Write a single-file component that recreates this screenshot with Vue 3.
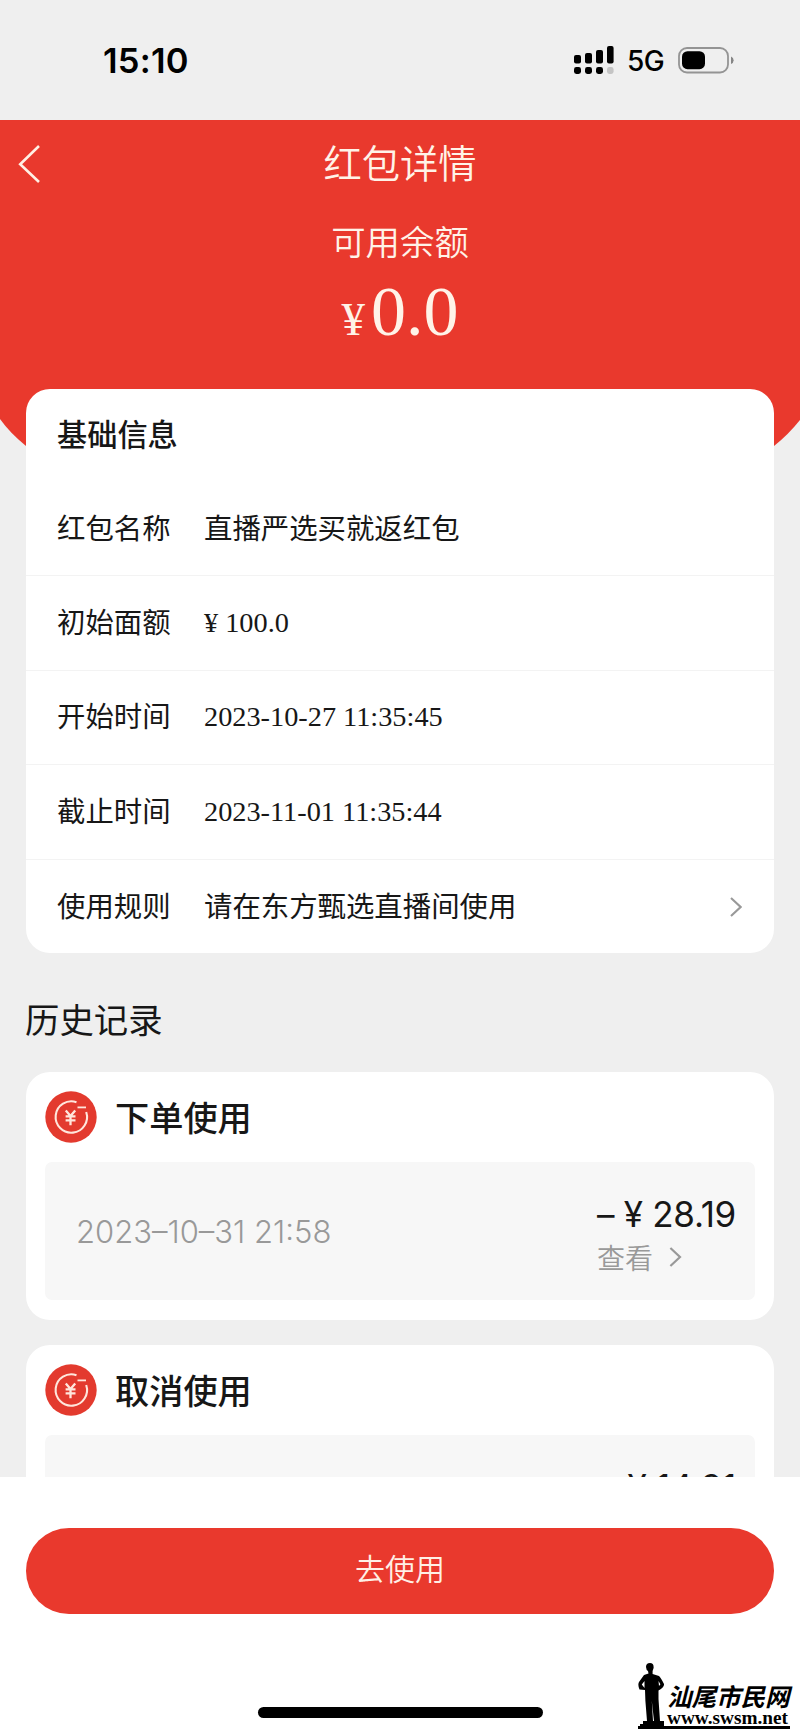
<script setup>
const rows = [
  { label: '红包名称', value: '直播严选买就返红包' },
  { label: '初始面额', value: '¥ 100.0', serif: true },
  { label: '开始时间', value: '2023-10-27 11:35:45', serif: true },
  { label: '截止时间', value: '2023-11-01 11:35:44', serif: true },
  { label: '使用规则', value: '请在东方甄选直播间使用', link: true },
]
const records = [
  { title: '下单使用', date: '2023–10–31 21:58', amount: '– ¥ 28.19', view: true },
  { title: '取消使用', date: '', amount: '¥ 14.91', view: false },
]
</script>

<template>
  <div class="page">
    <div class="status">
      <span class="time">15:10</span>
      <div class="indicators">
        <svg class="signal" width="40" height="28" viewBox="0 0 40 28">
          <rect x="0" y="9" width="7" height="8.5" rx="2" />
          <rect x="11" y="7" width="7" height="10.5" rx="2" />
          <rect x="22" y="4" width="7" height="13.5" rx="2" />
          <rect x="33" y="0" width="6.6" height="17.5" rx="2" />
          <rect x="0" y="21" width="7" height="7" rx="2.4" />
          <rect x="11" y="21" width="7" height="7" rx="2.4" />
          <rect x="22" y="21" width="7" height="7" rx="2.4" />
          <rect x="33" y="21" width="6.6" height="7" rx="2.4" fill="#c4c4c4" />
        </svg>
        <span class="net">5G</span>
        <svg width="56" height="27" viewBox="0 0 56 27">
          <rect x="1" y="1" width="49" height="24.5" rx="8" fill="none" stroke="#949494" stroke-width="1.8" />
          <rect x="4" y="4.2" width="23" height="18" rx="5.5" />
          <path d="M53 9.5Q55.6 10.5 55.6 13.2T53 17z" fill="#858585" />
        </svg>
      </div>
    </div>

    <div class="hero">
      <svg class="hero-bg" width="800" height="328" viewBox="0 0 800 328">
        <path d="M0 0H800V300Q788 315 774 326H26Q10 313 0 299z" fill="#e9392d" />
      </svg>
      <div class="nav">
        <svg class="back" width="23" height="40" viewBox="0 0 23 40">
          <path d="M21 2L2.2 20.2L21 38" fill="none" stroke="#fff0e4" stroke-width="2.6" />
        </svg>
        <span>红包详情</span>
      </div>
      <div class="caption">可用余额</div>
      <div class="balance"><span class="yen">¥</span><span>0.0</span></div>
    </div>

    <div class="scroll">
      <section class="info">
        <h2>基础信息</h2>
        <div v-for="row in rows" :key="row.label" class="row">
          <span class="label">{{ row.label }}</span>
          <span class="value" :class="{ serif: row.serif }">{{ row.value }}</span>
          <svg v-if="row.link" width="12" height="20" viewBox="0 0 12 20">
            <path d="M1 1L10.6 10L1 19" fill="none" stroke="#999" stroke-width="2.1" />
          </svg>
        </div>
      </section>

      <h3>历史记录</h3>

      <section v-for="record in records" :key="record.title" class="record">
        <div class="record-head">
          <svg width="52" height="52" viewBox="0 0 52 52">
            <circle cx="26" cy="26" r="25.7" fill="#e33a2e" />
            <path d="M31.5 11.2A15.7 15.7 0 1 0 41.2 21" fill="none" stroke="#ffe6dc" stroke-width="2.1" />
            <path d="M32.5 16.4H41" stroke="#ffe6dc" stroke-width="1.8" />
            <path d="M20.8 19.5L25.5 25L30.2 19.5M20.6 25.3H30.5M20.6 29.4H30.5M25.5 25V34.2" fill="none" stroke="#ffe6dc" stroke-width="2.3" />
          </svg>
          <span>{{ record.title }}</span>
        </div>
        <div class="record-body">
          <span class="date">{{ record.date }}</span>
          <div class="sum">
            <span class="amount">{{ record.amount }}</span>
            <span v-if="record.view" class="view">查看
              <svg width="13" height="20" viewBox="0 0 13 20">
                <path d="M1.4 1L11 10L1.4 19" fill="none" stroke="#999" stroke-width="2.2" />
              </svg>
            </span>
          </div>
        </div>
      </section>
    </div>

    <footer>
      <button>去使用</button>
      <div class="home"></div>
      <div class="mark">
        <svg width="30" height="68" viewBox="0 0 30 68">
          <path d="M8 4Q8 0 12 0Q16 0 15.6 5L14.6 8V11L21 13Q23 15 26 21Q26.5 24 20.5 27.5L20.5 36L22 58H26V63H30V66H2V61H5V58H9L7.4 38L7 27L1.5 26.5Q-.5 22 1 19L6 12L10.5 10.5L10 8Q8.2 7 8 4zM6.5 18L3.8 21.5L6.5 25zM20.5 18L21 23L22.4 21.2zM13.8 38L15 58H16z" fill-rule="evenodd" />
        </svg>
        <div class="mark-text">
          <span class="mark-name">汕尾市民网</span>
          <span class="mark-url">www.swsm.net</span>
        </div>
      </div>
    </footer>
  </div>
</template>

<style>
body { background: #efefef; }
</style>

<style scoped>
.page {
  width: 800px;
  height: 1734px;
  display: flex;
  flex-direction: column;
  overflow: hidden;
  background: #efefef;
  color: #171717;
  font-family: "Noto Sans CJK SC", sans-serif;
  white-space: nowrap;
}
.status {
  flex: none;
  height: 120px;
  box-sizing: border-box;
  padding: 0 66px 0 103px;
  display: flex;
  justify-content: space-between;
  align-items: center;
  font-family: Inter, sans-serif;
  color: #000;
}
.time { font-size: 34.5px; font-weight: 600; letter-spacing: .2px; }
.indicators { display: flex; align-items: center; }
.signal { margin-right: 13px; }
.net { font-size: 28px; font-weight: 500; width: 37px; margin-right: 14px; padding-top: 2px; letter-spacing: -.5px; }
.hero {
  flex: none;
  height: 269px;
  position: relative;
  color: #fff3e8;
  text-align: center;
  font-weight: 350;
}
.hero-bg { position: absolute; top: 0; left: 0; }
.nav {
  position: relative;
  height: 86px;
  line-height: 84px;
  font-size: 38.3px;
}
.back { position: absolute; left: 18px; top: 24px; }
.caption { position: relative; height: 66px; line-height: 68px; font-size: 34.4px; }
.balance {
  position: relative;
  display: flex;
  justify-content: center;
  align-items: baseline;
  gap: 6px;
  height: 80px;
  line-height: 80px;
  font-family: "Liberation Serif", serif;
  font-weight: 400;
  font-size: 70px;
}
.yen { font-size: 47px; }
.scroll {
  height: 1088px;
  flex: none;
  position: relative;
  overflow: hidden;
  padding: 0 26px;
}
.info { height: 564px; background: #fff; border-radius: 24px; overflow: hidden; }
h2 { margin: 0; padding-left: 31px; height: 93px; line-height: 89px; font-size: 30.2px; font-weight: 500; }
.row {
  height: 94.4px;
  box-sizing: border-box;
  padding: 0 32px 0 31px;
  display: flex;
  align-items: center;
  font-size: 28.4px;
  border-bottom: 1px solid #f3f3f3;
}
.row:last-child { border: 0; }
.label { width: 147px; padding-bottom: 5px; }
.value { flex: 1; padding-bottom: 5px; }
.serif { padding: 0; font-family: "Liberation Serif", serif; font-size: 28.3px; }
h3 { margin: 0 0 0 -1px; height: 119px; line-height: 131px; font-size: 34.4px; font-weight: 400; }
.record {
  height: 248px;
  box-sizing: border-box;
  margin-bottom: 25px;
  padding: 0 19px;
  background: #fff;
  border-radius: 24px;
}
.record-head { height: 90px; display: flex; align-items: center; gap: 18px; font-size: 34.2px; font-weight: 500; }
.record-head span { padding-bottom: 3px; }
.record-body {
  height: 138px;
  box-sizing: border-box;
  padding: 29px 19px 0 31px;
  display: flex;
  justify-content: space-between;
  background: #f7f7f7;
  border-radius: 7px;
  font-family: Inter, "Noto Sans CJK SC", sans-serif;
}
.date { font-size: 31px; line-height: 82px; font-weight: 350; color: #999; }
.sum { display: flex; flex-direction: column; }
.amount { font-size: 35px; line-height: 46px; letter-spacing: -.3px; }
.view { display: flex; align-items: center; gap: 16px; height: 40px; font: 28px "Noto Sans CJK SC", sans-serif; font-weight: 350; color: #999; }
footer {
  flex: 1;
  position: relative;
  background: #fff;
  padding: 51px 26px 0;
}
button {
  display: block;
  width: 748px;
  height: 86px;
  padding: 0 0 9px;
  border: 0;
  border-radius: 43px;
  background: #e9392d;
  color: #fff0e6;
  font: 350 30px "Noto Sans CJK SC", sans-serif;
}
.home { width: 285px; height: 11px; margin: 93px 0 0 232px; border-radius: 6px; background: #000; }
.mark {
  position: absolute;
  left: 638px;
  bottom: 5px;
  width: 152px;
  height: 66px;
  display: flex;
  align-items: flex-end;
  border-bottom: 3px solid #000;
  box-sizing: border-box;
  color: #000;
}
.mark svg { flex: none; margin-bottom: -5px; }
.mark-text { display: flex; flex-direction: column; margin-left: -1px; }
.mark-name { font-size: 24.5px; line-height: 27px; font-weight: 700; font-style: italic; }
.mark-url { font: bold 19.3px/17px "Liberation Serif", serif; }
</style>
